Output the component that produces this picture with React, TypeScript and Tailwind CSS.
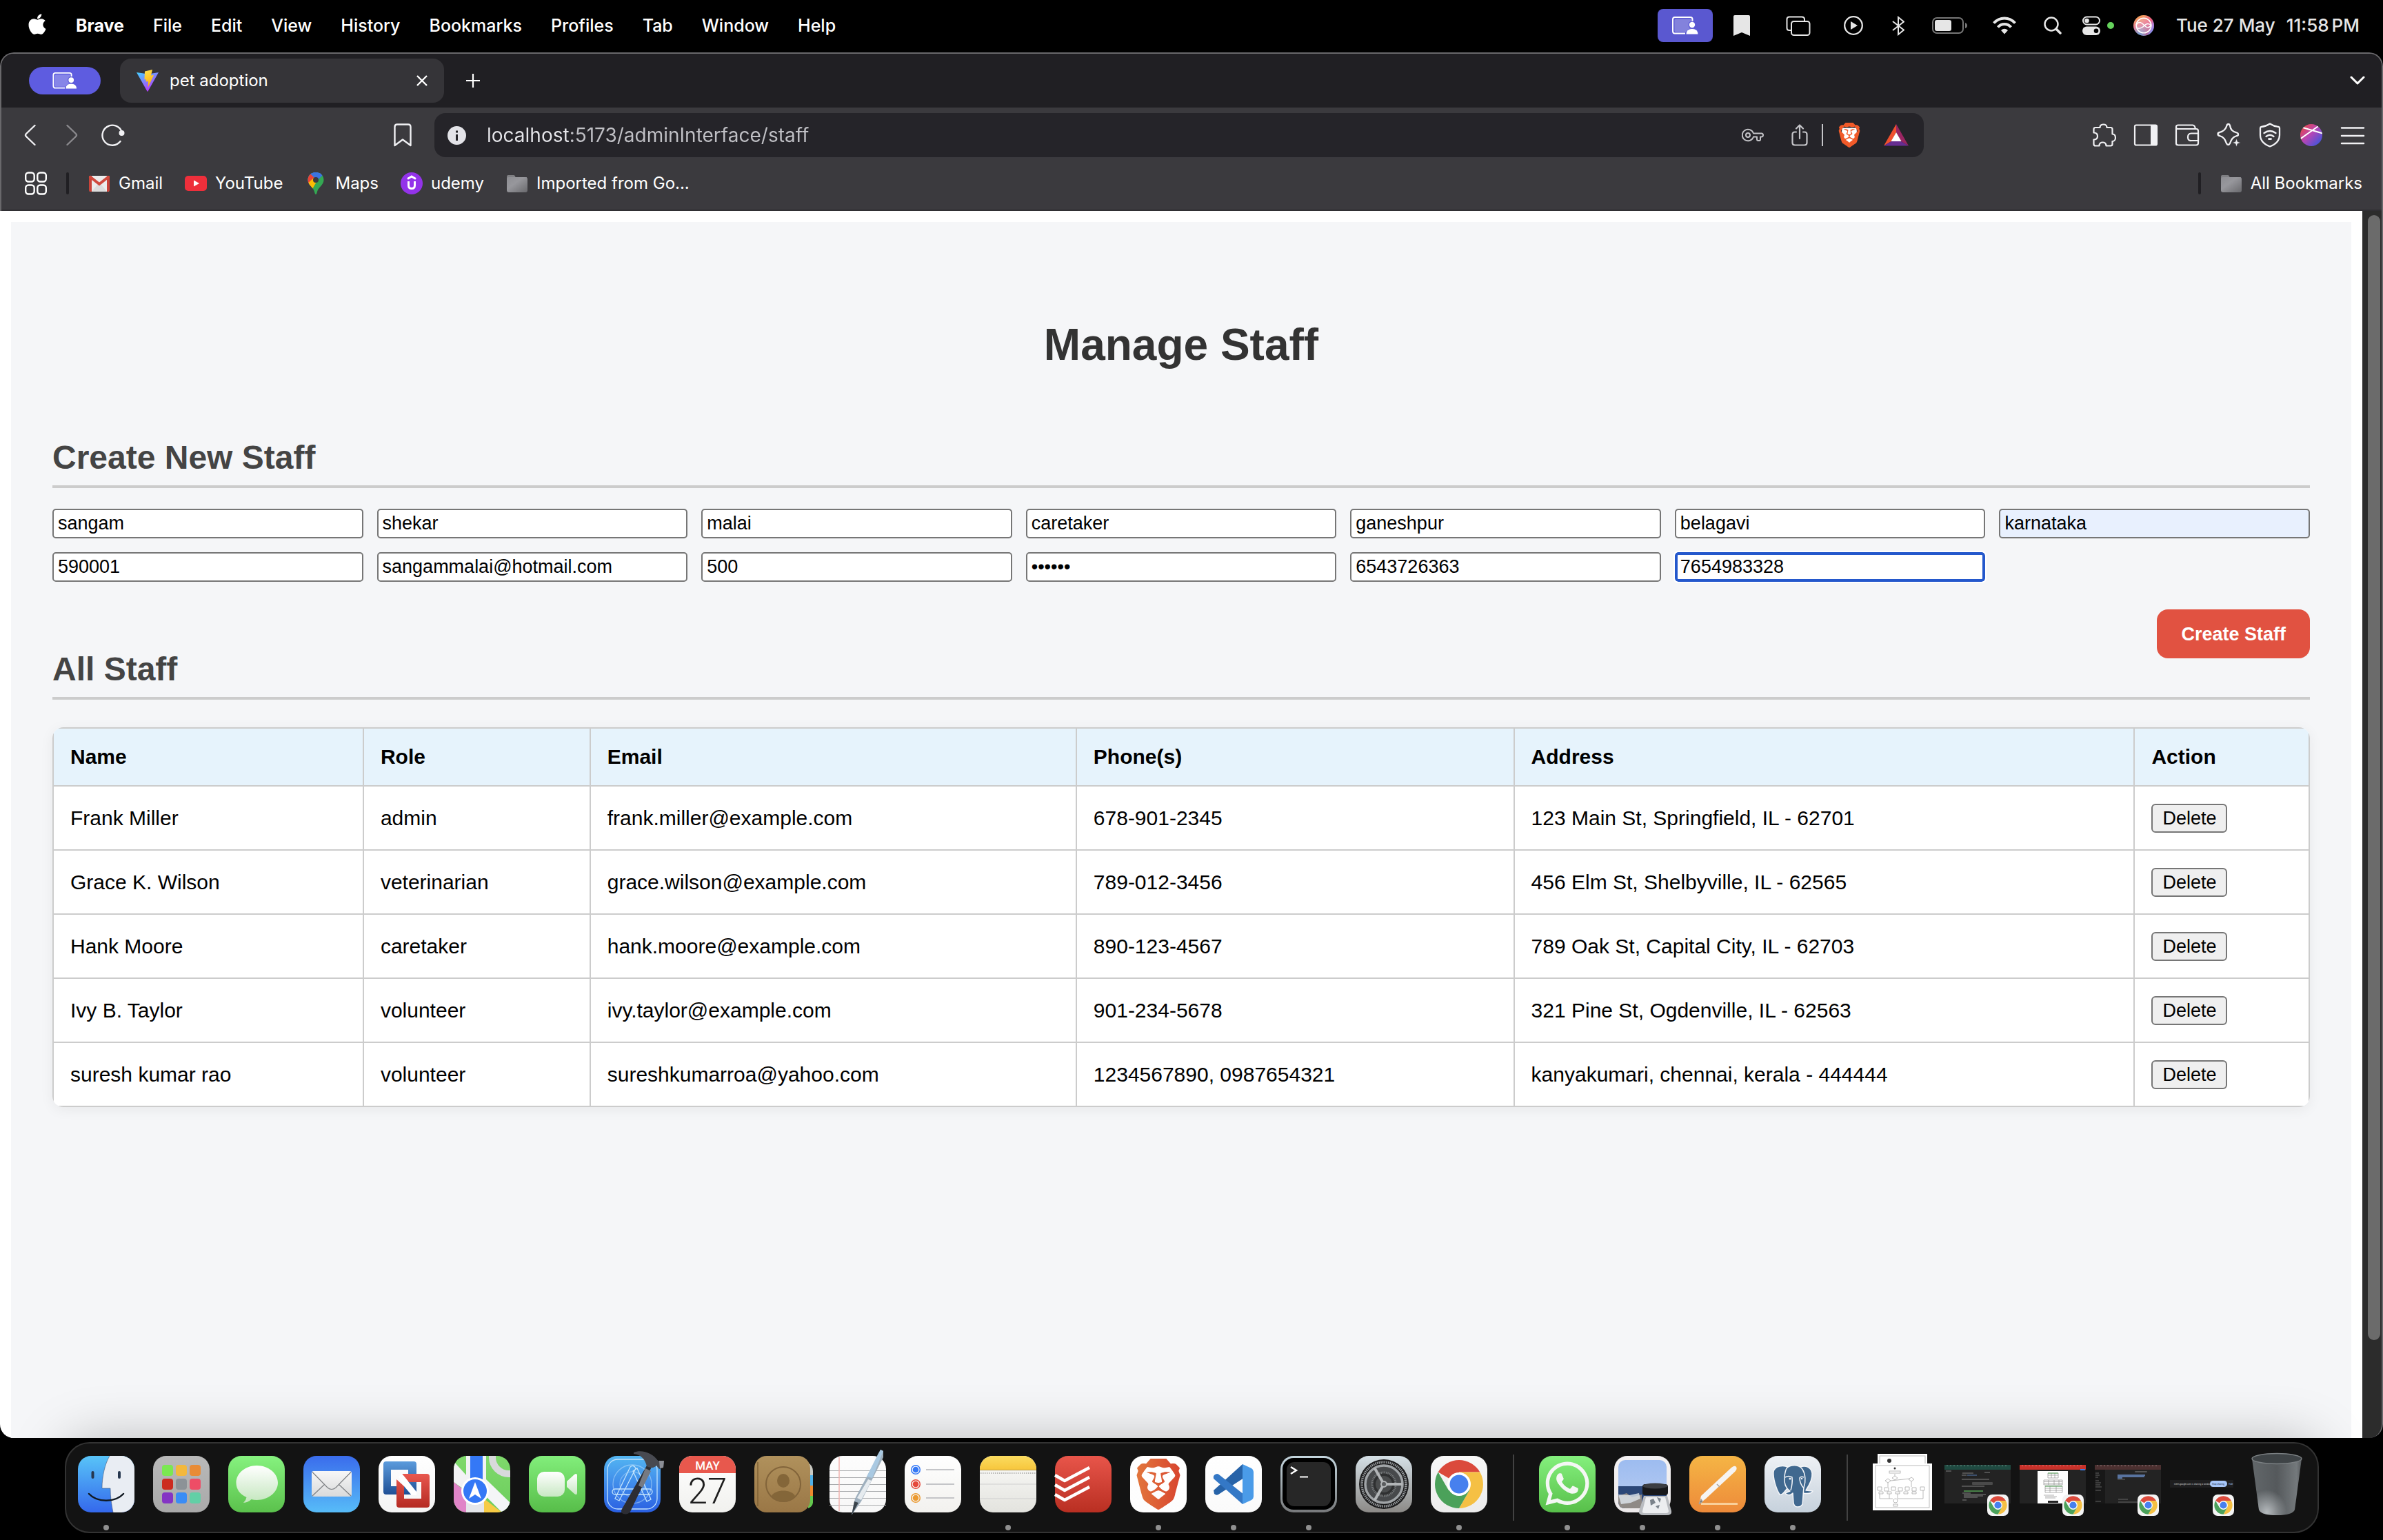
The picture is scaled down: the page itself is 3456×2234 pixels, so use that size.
import React from "react";
import { FaApple, FaWhatsapp } from "react-icons/fa";
import { SiBrave } from "react-icons/si";

/* ---------- shared glyphs ---------- */

function ShareGlyph({ className }: { className: string }) {
  return (
    <svg className={className} viewBox="0 0 38 26" fill="none">
      <rect x="3.5" y="3.5" width="25" height="19" rx="2" fill="#fff" fillOpacity="0.25" />
      <path d="M29.5 7V4Q29.5 1 26.5 1H4Q1 1 1 4V21Q1 24.500 4 24.500H19" stroke="#fff" strokeWidth="2" />
      <circle cx="29" cy="12" r="5.500" fill="#5a58d6" />
      <circle cx="29" cy="12" r="4.200" fill="#fff" />
      <path d="M20 26C20 20 24 17.500 29 17.500S38 20 38 26Z" fill="#fff" stroke="#5a58d6" strokeWidth="1" />
    </svg>
  );
}

function BraveLion({ className, fill }: { className: string; fill: string }) {
  return (
    <svg className={className} viewBox="0 0 24 24" overflow="visible">
      <path d="M5 5H19L19.500 12L16 18L12 21L8 18L4.500 12Z" fill="#fff" />
      <SiBrave x="0" y="0" size="24" fill={fill} />
    </svg>
  );
}

function FolderGlyph() {
  return (
    <svg className="h-7 w-8" viewBox="0 0 32 28">
      <defs>
        <linearGradient id="folder" x1="0" y1="0" x2="1" y2="1">
          <stop offset="0" stopColor="#8e8e93" />
          <stop offset="0.4" stopColor="#97979c" />
          <stop offset="1" stopColor="#69696d" />
        </linearGradient>
      </defs>
      <path d="M1 4Q1 2 3 2H11Q13 2 13.500 5H30V10H1Z" fill="#7f7f83" />
      <rect x="1" y="5" width="30" height="22" rx="3" fill="url(#folder)" />
    </svg>
  );
}

/* ---------- macOS menu bar ---------- */

const menus = ["File", "Edit", "View", "History", "Bookmarks", "Profiles", "Tab", "Window", "Help"];

function MenuBar() {
  return (
    <header className="flex h-[76px] shrink-0 items-center justify-between bg-black pr-[34px] pb-0.5 pl-10 text-[25px] leading-8 text-white">
      <nav className="flex items-center gap-[42px]">
        <button aria-label="Apple menu" className="flex w-7 justify-center pb-1">
          <FaApple size="34" className="shrink-0" />
        </button>
        <button className="font-bold">Brave</button>
        {menus.map((m) => (
          <button key={m} className="font-medium">
            {m}
          </button>
        ))}
      </nav>
      <div className="flex items-center text-[#e6e6e6]">
        <div className="flex h-12 w-20 items-center justify-center rounded-lg bg-[#5a58d0]">
          <ShareGlyph className="h-[26px] w-[38px]" />
        </div>
        <svg className="ml-[30px] h-[30px] w-6" viewBox="0 0 24 30">
          <path d="M0 2Q0 0 2 0H22Q24 0 24 2V30L12 25L0 30Z" fill="currentColor" />
        </svg>
        <svg className="ml-13 h-[29px] w-9" viewBox="0 0 36 29" fill="none" stroke="currentColor" strokeWidth="2">
          <path d="M7 21H5Q1.500 21 1.500 17.500V5Q1.500 1.500 5 1.500H23Q27 1.500 27 5V7" />
          <rect x="8" y="8" width="26.500" height="20" rx="3.500" />
        </svg>
        <svg className="ml-12 size-7" viewBox="0 0 28 28" fill="none">
          <circle cx="14" cy="14" r="12.800" stroke="currentColor" strokeWidth="2.300" />
          <path d="M10 8L20 14L10 20Z" fill="currentColor" />
        </svg>
        <svg className="ml-[42px] h-[29px] w-[18px]" viewBox="0 0 18 29" fill="none" stroke="currentColor" strokeWidth="2">
          <path d="M1 8L17 20.500L9 27V2L17 8.500L1 21" />
        </svg>
        <svg className="ml-10 h-6 w-[52px]" viewBox="0 0 52 24" fill="none">
          <rect x="1" y="1" width="44" height="22" rx="6" stroke="#767676" strokeWidth="2" />
          <rect x="4" y="4" width="24" height="16" rx="3" fill="currentColor" />
          <path d="M48 8Q51 9 51 12T48 16Z" fill="#767676" />
        </svg>
        <svg className="ml-9 h-[26px] w-[34px]" viewBox="0 0 34 26" fill="none" stroke="currentColor" strokeWidth="4">
          <path d="M1.500 9.500C10 0 24 0 32.500 9.500" />
          <path d="M7.500 15.500C12.500 9.500 21.500 9.500 26.500 15.500" />
          <path d="M12 20Q17 15.500 22 20L17 25.500Z" fill="currentColor" stroke="none" />
        </svg>
        <svg className="ml-10 h-[26px] w-[26px]" viewBox="0 0 26 26" fill="none" stroke="currentColor" strokeLinecap="round">
          <circle cx="11" cy="11" r="9.500" strokeWidth="2.500" />
          <path d="M18 18L24 24" strokeWidth="3.500" />
        </svg>
        <svg className="ml-[30px] h-7 w-[26px]" viewBox="0 0 26 28" fill="none">
          <rect x="1" y="1.500" width="24" height="11" rx="5.500" stroke="currentColor" strokeWidth="2" />
          <circle cx="6.500" cy="7" r="3.300" fill="currentColor" />
          <rect x="0" y="15.500" width="26" height="12.500" rx="6.200" fill="currentColor" />
          <circle cx="20" cy="21.700" r="3.300" fill="#000" />
        </svg>
        <span className="ml-2.5 size-2.5 rounded-full bg-[#65d35c]" />
        <svg className="ml-7 size-[30px]" viewBox="0 0 30 30">
          <defs>
            <linearGradient id="siriA" x1="0.2" y1="0" x2="0.6" y2="1">
              <stop offset="0" stopColor="#f5a24a" />
              <stop offset="0.45" stopColor="#e8829a" />
              <stop offset="1" stopColor="#48b6f5" />
            </linearGradient>
            <linearGradient id="siriB" x1="0" y1="0" x2="1" y2="0.3">
              <stop offset="0.5" stopColor="#f0506a" stopOpacity="0" />
              <stop offset="0.85" stopColor="#f0406a" />
              <stop offset="1" stopColor="#b478f0" />
            </linearGradient>
          </defs>
          <circle cx="15" cy="15" r="15" fill="url(#siriA)" />
          <circle cx="15" cy="15" r="15" fill="url(#siriB)" opacity="0.6" />
          <circle cx="15" cy="15" r="10.800" fill="#fff" fillOpacity="0.15" stroke="#fff" strokeWidth="1.600" />
          <path
            d="M4 14C9 7 13 12 16 15S22 20 26 14M4 18C9 21 13 18 16 15S22 11 26 15"
            fill="none"
            stroke="#fff"
            strokeWidth="1.400"
          />
        </svg>
        <time className="ml-8 flex gap-4 text-[26px] font-medium whitespace-nowrap">
          <span>Tue 27 May</span>
          <span className="flex gap-1">
            <span>11:58</span>
            <span>PM</span>
          </span>
        </time>
      </div>
    </header>
  );
}

/* ---------- browser chrome ---------- */

function TabStrip() {
  return (
    <div className="flex h-[78px] items-center justify-between bg-[#201f23] pr-6 pl-10">
      <div className="flex items-center">
        <button aria-label="Screen sharing" className="flex h-10 w-[104px] items-center justify-center rounded-full bg-[#5e5ce0]">
          <ShareGlyph className="h-6 w-9" />
        </button>
        <div className="ml-7 flex h-16 w-[470px] items-center rounded-2xl bg-[#353438] pr-5 pl-6 text-[24px] text-white">
          <svg className="size-8" viewBox="0 0 32 32">
            <defs>
              <linearGradient id="viteA" x1="0" y1="0" x2="0.6" y2="1">
                <stop offset="0" stopColor="#41d1ff" />
                <stop offset="1" stopColor="#bd34fe" />
              </linearGradient>
              <linearGradient id="viteB" x1="0.4" y1="0" x2="0.6" y2="1">
                <stop offset="0" stopColor="#ffdf4a" />
                <stop offset="1" stopColor="#ffa800" />
              </linearGradient>
            </defs>
            <path d="M0 4L15.500 31.500Q16 32 16.500 31.500L32 4L17 6.500Z" fill="url(#viteA)" />
            <path d="M12 2.500L23 0L21 8.500L25 8L16.500 26L17 17L13.500 17.500L14 14L11.500 14.500Z" fill="url(#viteB)" />
          </svg>
          <span className="ml-4 flex-1">pet adoption</span>
          <button aria-label="Close tab" className="flex size-6 items-center justify-center">
            <svg className="size-4" viewBox="0 0 16 16" stroke="#fff" strokeWidth="2.400">
              <path d="M1 1L15 15M15 1L1 15" />
            </svg>
          </button>
        </div>
        <button aria-label="New tab" className="ml-8">
          <svg className="size-5" viewBox="0 0 20 20" stroke="#fff" strokeWidth="2.200">
            <path d="M10 0V20M0 10H20" />
          </svg>
        </button>
      </div>
      <button aria-label="Search tabs">
        <svg className="h-3.5 w-[22px]" viewBox="0 0 22 14" fill="none" stroke="#fff" strokeWidth="3" strokeLinecap="round" strokeLinejoin="round">
          <path d="M2 2L11 11L20 2" />
        </svg>
      </button>
    </div>
  );
}

function Toolbar() {
  return (
    <div className="flex h-20 items-center bg-[#3b3a3e] text-[#f1f1f4]">
      <div className="flex w-[628px] shrink-0 items-center justify-between px-[33px]">
        <div className="flex items-center gap-[34px]">
          <button aria-label="Back">
            <svg className="h-8 w-[18px]" viewBox="0 0 18 32" fill="none" stroke="currentColor" strokeWidth="2.400" strokeLinecap="round" strokeLinejoin="round">
              <path d="M15.500 2L3 14Q1 16 3 18L15.500 30" />
            </svg>
          </button>
          <button aria-label="Forward" className="ml-2 text-[#8a898d]">
            <svg className="h-8 w-[18px]" viewBox="0 0 18 32" fill="none" stroke="currentColor" strokeWidth="2.400" strokeLinecap="round" strokeLinejoin="round">
              <path d="M2.500 2L15 14Q17 16 15 18L2.500 30" />
            </svg>
          </button>
          <button aria-label="Reload">
            <svg className="h-8 w-[34px]" viewBox="0 0 34 32" fill="none" stroke="currentColor" strokeWidth="2.400" strokeLinecap="round">
              <path d="M27.500 25A14.500 14.500 0 1 1 29.500 11" />
              <circle cx="29.500" cy="13" r="3" fill="currentColor" strokeWidth="2" />
            </svg>
          </button>
        </div>
        <button aria-label="Bookmark this page">
          <svg className="h-[34px] w-[26px]" viewBox="0 0 26 34" fill="none" stroke="currentColor" strokeWidth="2.400" strokeLinejoin="round">
            <path d="M1.500 5Q1.500 1.500 5 1.500H21Q24.500 1.500 24.500 5V32L13 23.500L1.500 32Z" />
          </svg>
        </button>
      </div>
      <div className="flex h-16 flex-1 items-center rounded-2xl bg-[#252429] pr-[22px] pl-[19px] text-[#c4c4c8]">
        <svg className="size-[27px]" viewBox="0 0 27 27">
          <circle cx="13.500" cy="13.500" r="13.500" fill="#e3e3e8" />
          <path d="M12 12H15V21H12Z M12 6.500H15V9.500H12Z" fill="#252429" />
        </svg>
        <input
          aria-label="Address"
          defaultValue="localhost:5173/adminInterface/staff"
          className="ml-[30px] h-10 min-w-0 flex-1 bg-[linear-gradient(90deg,#e6e6ea_121px,#c0c0c5_121px)] bg-clip-text text-[28px] text-transparent outline-none"
        />
        <button aria-label="Passwords">
          <svg className="h-5 w-8" viewBox="0 0 32 20" fill="none" stroke="currentColor" strokeWidth="2">
            <path d="M17 7.500A8.300 8.300 0 1 0 17 12.500H22V16Q22 18 24 18H25.500Q27 18 27 16V12.500H29Q31 12 31 10T29 7.500Z" strokeLinejoin="round" />
            <circle cx="9" cy="10" r="3" />
          </svg>
        </button>
        <button aria-label="Share" className="ml-10">
          <svg className="h-8 w-6" viewBox="0 0 24 32" fill="none" stroke="currentColor" strokeWidth="2.200" strokeLinecap="round" strokeLinejoin="round">
            <path d="M7 11.500H5Q1.500 11.500 1.500 15V27Q1.500 30.500 5 30.500H19Q22.500 30.500 22.500 27V15Q22.500 11.500 19 11.500H17" />
            <path d="M12 21V2M7 6.500L12 1.500L17 6.500" />
          </svg>
        </button>
        <span className="mx-5 h-8 w-0.5 bg-[#c4c4c8]" />
        <button aria-label="Brave Shields">
          <BraveLion className="size-9" fill="#f15a29" />
        </button>
        <button aria-label="Brave Rewards" className="ml-8">
          <svg className="h-8 w-9" viewBox="0 0 36 32">
            <path d="M18 0L0 31.500L11 25L18 12Z" fill="#f0502e" />
            <path d="M18 0L36 31.500L25 25L18 12Z" fill="#9a2562" />
            <path d="M0 31.500H36L25 25H11Z" fill="#662d91" />
            <path d="M18 12L25.500 25H10.500Z" fill="#fff" />
          </svg>
        </button>
      </div>
      <div className="flex w-[664px] shrink-0 items-center justify-end gap-6 pr-6">
        <button aria-label="Extensions">
          <svg className="size-9" viewBox="-1 -1 36 36" fill="none" stroke="currentColor" strokeWidth="2.200" strokeLinejoin="round">
            <path d="M4 6H10.500C10.500 3 12.500 1.500 15.500 1.500S20.500 3 20.500 6H26Q28.500 6 28.500 8.500V15.500C31.500 15.500 33 18 33 21S31 26 28.500 26V30Q28.500 32.500 26 32.500H19.500C19.500 29 17 27.500 14.500 27.500S9.500 29 9.500 32.500H4Q1.500 32.500 1.500 30V23.500C5 23.500 7 21.500 7 18.500S5 13.500 1.500 13.500V8.500Q1.500 6 4 6Z" />
          </svg>
        </button>
        <button aria-label="Side panel">
          <svg className="size-9" viewBox="0 0 36 36" fill="none">
            <rect x="2" y="3.500" width="32" height="29" rx="2" stroke="currentColor" strokeWidth="2.200" />
            <path d="M25 3H33Q34.500 3 34.500 5V31Q34.500 33 33 33H25Z" fill="currentColor" />
          </svg>
        </button>
        <button aria-label="Wallet">
          <svg className="size-9" viewBox="0 0 36 36" fill="none" stroke="currentColor" strokeWidth="2.200" strokeLinejoin="round">
            <path d="M2 6V30Q2 32.500 5 32.500H31Q34 32.500 34 29.500V12Q34 9 31 9H3Q2 8 2 6Q2 3.500 5 3.500H26Q29 3.500 30 9" />
            <path d="M34 15.500H24Q19 15.500 19 21T24 26H34Z" />
          </svg>
        </button>
        <button aria-label="Leo AI">
          <svg className="size-9" viewBox="0 0 36 36" fill="none" stroke="currentColor" strokeWidth="2.300" strokeLinejoin="round">
            <path d="M18 2Q19.500 2 20 4C21 10 23 12.500 30 14.500Q32 15 32 17T30 19C24 21 22 24 20 30Q19 32 17.500 32T15 30C13 24 11 21 5 19Q2.500 18.500 2.500 16.500T5 14C11 12.500 14 10 15.500 4Q16 2 18 2Z" />
            <path d="M29.500 23L31 27.500L35.500 29L31 30.500L29.500 35L28 30.500L23.500 29L28 27.500Z" fill="currentColor" stroke="#3b3a3e" strokeWidth="0.500" />
          </svg>
        </button>
        <button aria-label="VPN">
          <svg className="size-9" viewBox="0 0 36 36" fill="none" stroke="currentColor" strokeWidth="2.300" strokeLinejoin="round">
            <path d="M18 1.500Q24 5.500 30.500 6Q32 6.200 32 8V18C32 26 26 32 18 34.500C10 32 4 26 4 18V8Q4 6.200 5.500 6Q12 5.500 18 1.500Z" />
            <path d="M9.500 15Q18 9 26.500 15M12.500 20Q18 15.500 23.500 20" strokeLinecap="round" />
            <ellipse cx="18" cy="23.500" rx="3" ry="1.500" fill="currentColor" stroke="none" />
          </svg>
        </button>
        <button aria-label="Profile">
          <svg className="size-9" viewBox="0 0 36 36">
            <defs>
              <linearGradient id="avatar" x1="0.1" y1="0.1" x2="0.9" y2="0.9">
                <stop offset="0" stopColor="#e5484d" />
                <stop offset="0.45" stopColor="#b745b5" />
                <stop offset="1" stopColor="#3f55dd" />
              </linearGradient>
              <clipPath id="avatarClip">
                <circle cx="18" cy="18" r="16" />
              </clipPath>
            </defs>
            <circle cx="18" cy="18" r="16" fill="url(#avatar)" />
            <path d="M0 25L31 3M2 6L36 16" stroke="#fff" strokeWidth="2" clipPath="url(#avatarClip)" />
          </svg>
        </button>
        <button aria-label="Menu">
          <svg className="size-9" viewBox="0 0 36 36" stroke="currentColor" strokeWidth="2.500" strokeLinecap="round">
            <path d="M2 7.500H34M2 19H34M2 30H34" />
          </svg>
        </button>
      </div>
    </div>
  );
}

function GmailGlyph() {
  return (
    <svg className="size-8" viewBox="0 0 32 32">
      <path d="M2 5H30V28H2Z" fill="#ececec" />
      <path d="M5 28L13 18H19L27 28Z" fill="#dcdcdc" />
      <path d="M1 5H5V28H3Q1 28 1 26Z M31 5H27V28H29Q31 28 31 26Z" fill="#c9443a" />
      <path d="M2 6L16 17L30 6" fill="none" stroke="#d04a3e" strokeWidth="4" />
    </svg>
  );
}

function YoutubeGlyph() {
  return (
    <svg className="size-8" viewBox="0 0 32 32">
      <rect x="0" y="5" width="32" height="22" rx="5" fill="#ee2f3b" />
      <path d="M13 11.500L21 16L13 20.500Z" fill="#fff" />
    </svg>
  );
}

function MapsGlyph() {
  return (
    <svg className="size-8" viewBox="0 0 32 32">
      <defs>
        <clipPath id="pin">
          <path d="M16 0C22.500 0 27.500 4.500 27.500 11C27.500 19 19 21 17.500 30Q17 32 16 32T14.500 30C13 21 4.500 19 4.500 11C4.500 4.500 9.500 0 16 0Z" />
        </clipPath>
      </defs>
      <g clipPath="url(#pin)">
        <rect width="32" height="32" fill="#34a853" />
        <path d="M0 24L16 11L24 2L32 0V-2H4Z" fill="#4285f4" />
        <path d="M0 0L8 2L18 10L8 20L0 16Z" fill="#ea4335" />
        <path d="M8 2L16 -2L30 0L18 12Z" fill="#3b74e0" />
        <path d="M2 18L13 8L18 12L10 26Z" fill="#fbbc04" />
      </g>
      <circle cx="16" cy="11" r="4" fill="#3b3a3e" />
    </svg>
  );
}

function UdemyGlyph() {
  return (
    <svg className="size-8" viewBox="0 0 32 32" fill="none">
      <circle cx="16" cy="16" r="16" fill="#9333ea" />
      <path d="M10 9.500L16 6L22 9.500" stroke="#fff" strokeWidth="3" />
      <path d="M11.500 13V19Q11.500 23.500 16 23.500T20.500 19V13" stroke="#fff" strokeWidth="3" />
    </svg>
  );
}

const bookmarks = [
  { label: "Gmail", icon: <GmailGlyph /> },
  { label: "YouTube", icon: <YoutubeGlyph /> },
  { label: "Maps", icon: <MapsGlyph /> },
  { label: "udemy", icon: <UdemyGlyph /> },
  { label: "Imported from Go...", icon: <FolderGlyph /> },
];

function BookmarksBar() {
  return (
    <div className="flex h-[70px] items-center justify-between border-b-2 border-[#302f33] bg-[#3b3a3e] pr-7 pb-2 pl-[34px] text-[24px] text-white">
      <div className="flex items-center">
        <button aria-label="Bookmark groups">
          <svg className="h-[34px] w-8" viewBox="0 0 32 34" fill="none" stroke="currentColor" strokeWidth="2.400">
            <rect x="1.200" y="1.500" width="12.500" height="13" rx="4" />
            <rect x="18.300" y="1.500" width="12.500" height="13" rx="4" />
            <rect x="1.200" y="19.500" width="12.500" height="13" rx="4" />
            <rect x="18.300" y="19.500" width="12.500" height="13" rx="4" />
          </svg>
        </button>
        <span className="mx-7 h-8 w-1 rounded-full bg-[#201f23]" />
        <nav className="flex items-center gap-8">
          {bookmarks.map((b) => (
            <a key={b.label} href="#" className="flex items-center gap-3 whitespace-nowrap">
              {b.icon}
              {b.label}
            </a>
          ))}
        </nav>
      </div>
      <div className="flex items-center">
        <span className="mr-7 h-8 w-1 rounded-full bg-[#201f23]" />
        <a href="#" className="flex items-center gap-3">
          <FolderGlyph />
          All Bookmarks
        </a>
      </div>
    </div>
  );
}

/* ---------- page ---------- */

const fields = [
  { label: "First name", value: "sangam" },
  { label: "Middle name", value: "shekar" },
  { label: "Last name", value: "malai" },
  { label: "Role", value: "caretaker" },
  { label: "Street", value: "ganeshpur" },
  { label: "City", value: "belagavi" },
  { label: "State", value: "karnataka", state: "filled" },
  { label: "Zip code", value: "590001" },
  { label: "Email", value: "sangammalai@hotmail.com" },
  { label: "Salary", value: "500" },
  { label: "Password", value: "secret", type: "password" },
  { label: "Phone 1", value: "6543726363" },
  { label: "Phone 2", value: "7654983328", state: "active" },
];

const staff = [
  ["Frank Miller", "admin", "frank.miller@example.com", "678-901-2345", "123 Main St, Springfield, IL - 62701"],
  ["Grace K. Wilson", "veterinarian", "grace.wilson@example.com", "789-012-3456", "456 Elm St, Shelbyville, IL - 62565"],
  ["Hank Moore", "caretaker", "hank.moore@example.com", "890-123-4567", "789 Oak St, Capital City, IL - 62703"],
  ["Ivy B. Taylor", "volunteer", "ivy.taylor@example.com", "901-234-5678", "321 Pine St, Ogdenville, IL - 62563"],
  ["suresh kumar rao", "volunteer", "sureshkumarroa@yahoo.com", "1234567890, 0987654321", "kanyakumari, chennai, kerala - 444444"],
];

function fieldStyle(state?: string) {
  if (state === "filled") return "border-2 border-[#767676] bg-[#e8f0fe] px-1.5";
  if (state === "active") return "border-4 border-[#2458cc] bg-white px-1 outline-2 outline-white";
  return "border-2 border-[#767676] bg-white px-1.5";
}

function StaffPage() {
  return (
    <main className="flex-1 bg-white p-4 pb-0 font-['Liberation_Sans',Arial,sans-serif] text-black">
      <div className="h-full bg-[#f5f6f8] px-[60px] pt-[142px] pb-16">
        <h1 className="text-center text-[64px] leading-[72px] font-bold text-[#333]">Manage Staff</h1>
        <h2 className="mt-[100px] border-b-4 border-[#ccc] pb-3 text-5xl leading-[56px] font-bold text-[#444]">
          Create New Staff
        </h2>
        <form className="mt-[30px]" onSubmit={(e) => e.preventDefault()}>
          <div className="grid grid-cols-7 gap-5">
            {fields.map((f) => (
              <input
                key={f.label}
                aria-label={f.label}
                type={f.type ?? "text"}
                defaultValue={f.value}
                className={`h-[43px] w-full min-w-0 rounded-[5px] text-[27px] leading-8 ${fieldStyle(f.state)}`}
              />
            ))}
          </div>
          <div className="mt-10 flex justify-end">
            <button className="h-[71px] rounded-2xl bg-[#e15241] px-[35px] text-[27px] leading-8 font-bold text-white">
              Create Staff
            </button>
          </div>
        </form>
        <h2 className="-mt-3 border-b-4 border-[#ccc] pb-3 text-5xl leading-[56px] font-bold text-[#444]">All Staff</h2>
        <div className="mt-10 overflow-hidden rounded-2xl shadow-[0_4px_20px_rgba(0,0,0,0.06)]">
          <table className="w-full table-fixed border-collapse bg-white text-left text-[30px] leading-9">
            <colgroup>
              <col className="w-[13.75%]" />
              <col className="w-[10.05%]" />
              <col className="w-[21.55%]" />
              <col className="w-[19.4%]" />
              <col className="w-[27.5%]" />
              <col />
            </colgroup>
            <thead className="bg-[#e6f3fc]">
              <tr className="h-[84px]">
                {["Name", "Role", "Email", "Phone(s)", "Address", "Action"].map((h) => (
                  <th key={h} className="border-2 border-[#ccc] px-6 font-bold">
                    {h}
                  </th>
                ))}
              </tr>
            </thead>
            <tbody>
              {staff.map((row) => (
                <tr key={row[0]} className="h-[93px]">
                  {row.map((cell, i) => (
                    <td key={i} className="border-2 border-[#ccc] px-6">
                      {cell}
                    </td>
                  ))}
                  <td className="border-2 border-[#ccc] px-6">
                    <button className="block h-[42px] rounded-md border-2 border-[#767676] bg-[#efefef] px-3.5 text-[27px] leading-8">
                      Delete
                    </button>
                  </td>
                </tr>
              ))}
            </tbody>
          </table>
        </div>
      </div>
    </main>
  );
}

function BrowserWindow() {
  return (
    <section className="flex flex-1 flex-col overflow-hidden rounded-[20px] bg-[#201f23]">
      <div className="overflow-hidden rounded-t-[20px] border-2 border-b-0 border-[#69686b]">
        <TabStrip />
        <Toolbar />
        <BookmarksBar />
      </div>
      <div className="flex flex-1">
        <StaffPage />
        <div className="flex w-[30px] flex-col items-end rounded-br-[20px] border-r-2 border-[#69686b] bg-[#2c2c2c] pt-1.5 pr-0.5">
          <div className="h-[92%] w-[18px] rounded-full bg-[#6b6b6b]" />
        </div>
      </div>
    </section>
  );
}

/* ---------- dock ---------- */

function Gradient({ id, from, to }: { id: string; from: string; to: string }) {
  return (
    <linearGradient id={id} x1="0" y1="0" x2="0" y2="1">
      <stop offset="0" stopColor={from} />
      <stop offset="1" stopColor={to} />
    </linearGradient>
  );
}

function Tile({ id, from, to, children }: { id: string; from: string; to: string; children?: React.ReactNode }) {
  return (
    <svg className="size-[82px] overflow-visible" viewBox="0 0 82 82">
      <defs>
        <Gradient id={id} from={from} to={to} />
        <clipPath id={`${id}-clip`}>
          <rect width="82" height="82" rx="19" />
        </clipPath>
      </defs>
      <rect width="82" height="82" rx="19" fill={`url(#${id})`} />
      {children}
    </svg>
  );
}

function ChromeBall() {
  return (
    <g>
      <path d="M10.700 23.500A35 35 0 0 1 71.300 23.500H41V41Z" fill="#db4a3c" />
      <path d="M71.300 23.500A35 35 0 0 1 41 76L56.200 49.700L41 41V23.500Z" fill="#f5c044" />
      <path d="M10.700 23.500A35 35 0 0 0 41 76L56.200 49.700L41 41L25.800 49.700Z" fill="#4ba15a" />
      <circle cx="41" cy="41" r="17" fill="#fff" />
      <circle cx="41" cy="41" r="13.500" fill="#4780ee" />
    </g>
  );
}

function ChromeBadge() {
  return (
    <svg x="64" y="56" width="31" height="31" viewBox="0 0 82 82">
      <rect width="82" height="82" rx="19" fill="#f4f4f4" />
      <ChromeBall />
    </svg>
  );
}

function Finder() {
  return (
    <Tile id="finder" from="#58c4f8" to="#3468ec">
      <g clipPath="url(#finder-clip)">
        <path d="M46 0C39 12 35 30 35 47H47C47 60 49 72 51 82H82V0Z" fill="#e9edf3" />
        <path d="M46 0C39 12 35 30 35 47H47C47 60 49 72 51 82" fill="none" stroke="#3c4a66" strokeOpacity="0.5" />
      </g>
      <path d="M21.500 24V31M60 24V31" stroke="#26374f" strokeWidth="4" strokeLinecap="round" />
      <path d="M16 55C28 68 54 68 66 55" fill="none" stroke="#101820" strokeWidth="2.500" strokeLinecap="round" />
    </Tile>
  );
}

const padColors = ["#7be851", "#f3b83c", "#e88b36", "#cc2b20", "#8c9297", "#ee4d66", "#8434c4", "#3a8cf5", "#62cfa6"];

function Launchpad() {
  return (
    <Tile id="pad" from="#b9b9b9" to="#a9a9a9">
      {padColors.map((c, i) => (
        <rect key={c} x={13 + (i % 3) * 20} y={13 + Math.floor(i / 3) * 20} width="16" height="16" rx="4" fill={c} />
      ))}
    </Tile>
  );
}

function Messages() {
  return (
    <Tile id="msg" from="#86f27f" to="#5bc14c">
      <Gradient id="bubble" from="#ffffff" to="#c3e6bd" />
      <path d="M41.500 14C58 14 72 25 72 39S58 64 41.500 64Q37 64 33.500 63Q29 67.500 22 68Q26 64 26.500 60C17 56 11.500 48 11.500 39C11.500 25 25 14 41.500 14Z" fill="url(#bubble)" />
    </Tile>
  );
}

function Mail() {
  return (
    <Tile id="mail" from="#3a6cec" to="#57bcf8">
      <Gradient id="envelope" from="#f7f7f7" to="#d9dadb" />
      <rect x="12" y="22" width="58" height="37" rx="3" fill="url(#envelope)" />
      <path d="M13 58L31 41M69 58L51 41M13 23.500L35 46Q41 51 47 46L69 23.500" fill="none" stroke="#7e8184" strokeWidth="1.200" />
    </Tile>
  );
}

function VmWare() {
  return (
    <Tile id="vm" from="#ffffff" to="#f4f4f4">
      <Gradient id="vmBlue" from="#5b9bdc" to="#1f4f95" />
      <Gradient id="vmRed" from="#e8584f" to="#b52a22" />
      <path fillRule="evenodd" d="M11 8H51Q55 8 55 12V52Q55 56 51 56H11Q7 56 7 52V12Q7 8 11 8ZM18 20V44H43V20Z" fill="url(#vmBlue)" />
      <path d="M34 26H70Q74 26 74 30V71Q74 75 70 75H30Q26 75 26 71V34L37 44V62H62V38H44Z" fill="url(#vmRed)" />
      <path d="M29 30L34 26L55 52V57H48L37 44Z" fill="#fff" />
    </Tile>
  );
}

function Maps() {
  return (
    <Tile id="maps" from="#7fd96c" to="#6ccd5c">
      <g clipPath="url(#maps-clip)">
        <path d="M0 8V38L20 52V30Z" fill="#f2f2f4" />
        <path d="M0 38L22 55V82H0Z" fill="#e084c8" />
        <path d="M44 62V82H70Z" fill="#f6cb45" />
        <path d="M18 0H26V50H18Z M40 0H47V50H40Z" fill="#f1f2f4" />
        <path d="M22 55H44V82H18V52Z" fill="#e4e6ea" />
        <path d="M47 34L82 68V82H70L40 52Z" fill="#f4f5f7" />
        <path d="M24 0H42V45H24Z" fill="#3478f6" />
        <circle cx="80" cy="2" r="24" fill="none" stroke="#d8d9dc" strokeWidth="10" />
      </g>
      <circle cx="31" cy="51" r="20" fill="#fff" />
      <circle cx="31" cy="51" r="17" fill="#3478f6" />
      <path d="M31 38L40 62L31 56L22 62Z" fill="#fff" />
    </Tile>
  );
}

function FaceTime() {
  return (
    <Tile id="ft" from="#82ee7b" to="#57bd49">
      <Gradient id="cam" from="#ffffff" to="#c8e8c3" />
      <rect x="12" y="23" width="40" height="36" rx="10" fill="url(#cam)" />
      <path d="M55 37L66 27Q70 24 70 29V53Q70 58 66 55L55 45Z" fill="url(#cam)" />
    </Tile>
  );
}

function Xcode() {
  return (
    <Tile id="xcode" from="#54b6f2" to="#2a5fe2">
      <g fill="none" stroke="#c3e4fd" strokeWidth="1.300">
        <rect x="5" y="5" width="72" height="72" rx="15" />
        <circle cx="41" cy="41" r="28" strokeOpacity="0.5" />
        <circle cx="41" cy="41" r="18" strokeOpacity="0.4" />
        <path d="M38 16L16 62L22 65L46 18Q43 12 38 16ZM42 22L62 66L68 63L48 18Z" />
        <rect x="12" y="48" width="58" height="8" rx="4" />
      </g>
      <path d="M62 14L69 16L38 81Q33 87 26 83Q24 80 26 77Z" fill="#2c2d33" />
      <path d="M60 18L68 22L56 46L50 43Z" fill="#767a82" />
      <path d="M43 -5C55 -10 71 -4 78 7L87 7L86 17L80 19L76 14C72 18 68 18 62 15C60 6 54 -2 43 -3Z" fill="#484a51" />
      <path d="M80 7L87 7L86 17L81 18Z" fill="#8c8f96" />
    </Tile>
  );
}

function Calendar() {
  return (
    <Tile id="cal" from="#ffffff" to="#f1f1ee">
      <g clipPath="url(#cal-clip)">
        <rect width="82" height="25" fill="#e8584d" />
      </g>
      <text x="41" y="20" textAnchor="middle" fontFamily="Roboto, sans-serif" fontWeight="500" fontSize="17" fill="#fff">
        MAY
      </text>
      <text x="41" y="69" textAnchor="middle" fontFamily="Roboto, sans-serif" fontWeight="300" fontSize="51" fill="#1e1e1e">
        27
      </text>
    </Tile>
  );
}

function Contacts() {
  return (
    <svg className="size-[82px] overflow-visible" viewBox="0 0 82 82">
      <Gradient id="book" from="#b0915c" to="#9a7746" />
      <path d="M78 10Q85 14 85 22V28H78Z" fill="#c9c9c3" />
      <path d="M78 28H85V43H78Z" fill="#4fb0e8" />
      <path d="M78 43H85V58H78Z" fill="#ee8a2e" />
      <path d="M78 58H85V68Q84 74 78 76Z" fill="#63c84e" />
      <rect width="81" height="82" rx="18" fill="url(#book)" />
      <path d="M5 9V73" stroke="#7e6034" strokeWidth="1.500" />
      <circle cx="42" cy="41" r="25" fill="none" stroke="#82643a" strokeWidth="2" />
      <ellipse cx="42" cy="36" rx="9" ry="10" fill="#846639" />
      <path d="M25 58C30 48 54 48 59 58C50 69 34 69 25 58Z" fill="#846639" />
    </svg>
  );
}

function TextEdit() {
  return (
    <Tile id="te" from="#fdfdfd" to="#f7f7f7">
      <path d="M0 21.500H82M0 31.500H82M0 41.500H82M0 51.500H82M0 61.500H82M0 71.500H82" stroke="#a9abad" strokeWidth="1.200" />
      <path d="M14 2V80" stroke="#f2b4b0" strokeWidth="1.500" />
      <path d="M74 -9L78 -7V2L46 66L32 86L37 62L70 0Z" fill="#9fb0be" />
      <path d="M74 -9L78 -7L62 32L54 30L70 -2Z" fill="#a9c9e2" />
      <path d="M56 34L61 36L46 64L40 61Z" fill="#e6ebef" />
      <path d="M36 66L42 68L32 86Z" fill="#3b444c" />
    </Tile>
  );
}

const reminderRows = [
  { y: 20, color: "#3478f6" },
  { y: 41, color: "#e5493c" },
  { y: 61, color: "#eb9a31" },
];

function Reminders() {
  return (
    <Tile id="rem" from="#ffffff" to="#f2f1ee">
      {reminderRows.map((r) => (
        <g key={r.y}>
          <circle cx="16" cy={r.y} r="6.300" fill="none" stroke={r.color} strokeWidth="1.500" />
          <circle cx="16" cy={r.y} r="4.300" fill={r.color} />
          <path d={`M31 ${r.y}H72`} stroke="#b3b5b8" strokeWidth="1.500" />
        </g>
      ))}
    </Tile>
  );
}

function Notes() {
  return (
    <Tile id="notes" from="#fbfbf9" to="#e3e3de">
      <Gradient id="notesTop" from="#fbdc60" to="#f7c63c" />
      <g clipPath="url(#notes-clip)">
        <rect width="82" height="20" fill="url(#notesTop)" />
      </g>
      <path d="M0 20.500H82" stroke="#b89a4a" strokeWidth="1" />
      <path d="M1 25H82" stroke="#a5a5a2" strokeWidth="1.500" strokeDasharray="1.500 1.500" />
      <path d="M0 41H82M0 62H82" stroke="#cfd0d0" strokeWidth="1.200" />
    </Tile>
  );
}

function Todoist() {
  return (
    <Tile id="todo" from="#e8554a" to="#b92f22">
      <path d="M0 28L14 36L50 17M0 42L14 50L50 31M0 56L14 64L50 45" fill="none" stroke="#fff" strokeWidth="4.500" strokeLinejoin="round" />
    </Tile>
  );
}

function BraveApp() {
  return (
    <Tile id="brave" from="#ffffff" to="#fdfdfd">
      <defs>
        <linearGradient id="lion" x1="0" y1="0" x2="1" y2="0">
          <stop offset="0" stopColor="#e2763c" />
          <stop offset="1" stopColor="#d8452f" />
        </linearGradient>
      </defs>
      <SiBrave x="4" y="4" size="74" fill="url(#lion)" />
    </Tile>
  );
}

function VsCode() {
  return (
    <Tile id="vsc" from="#ffffff" to="#fafafa">
      <path d="M54 12L56 32L19 56Q16 58 13 55L12 50Z" fill="#2763a8" />
      <path d="M12 32Q11 29 14 27L17 26Q19 26 21 28L56 56L54 70L12 33Z" fill="#3478c6" />
      <path d="M54 12L67 18Q70 20 70 23V59Q70 62 67 64L54 70Z" fill="#4a9be8" />
    </Tile>
  );
}

function Terminal() {
  return (
    <Tile id="term" from="#c4d6de" to="#77797b">
      <rect x="3" y="3" width="76" height="75" rx="16" fill="#000" />
      <rect x="9" y="9" width="64" height="64" rx="11" fill="#272727" />
      <path d="M15 16L23 21L15 26" fill="none" stroke="#fff" strokeWidth="2.500" />
      <path d="M28 30.500H40" stroke="#fff" strokeWidth="2" />
    </Tile>
  );
}

function Settings() {
  return (
    <Tile id="set" from="#d5e0e6" to="#8c8a87">
      <circle cx="41" cy="41" r="36" fill="#1c1c1d" />
      <circle cx="41" cy="41" r="32" fill="none" stroke="#9b9fa2" strokeWidth="3.500" strokeDasharray="1.500 1.200" />
      <circle cx="41" cy="41" r="27" fill="#47494b" stroke="#a0a4a7" strokeWidth="3.500" />
      <circle cx="41" cy="41" r="17" fill="#2f3031" stroke="#75787a" strokeWidth="3" strokeDasharray="1.500 1" />
      <circle cx="41" cy="41" r="12" fill="#4a4c4d" />
      <path d="M41 41H68M41 41L27.500 17.500M41 41L27.500 64.500" stroke="#b2b5b7" strokeWidth="4" />
      <circle cx="41" cy="41" r="4" fill="#5a5c5e" stroke="#b2b5b7" strokeWidth="2" />
    </Tile>
  );
}

function Chrome() {
  return (
    <Tile id="chrome" from="#f8f8f8" to="#ececec">
      <ChromeBall />
    </Tile>
  );
}

function WhatsApp() {
  return (
    <Tile id="wa" from="#84f07d" to="#58bf4a">
      <FaWhatsapp x="5" y="4" size="72" fill="#f5f7f5" />
    </Tile>
  );
}

function Preview() {
  return (
    <Tile id="prev" from="#f4f2f3" to="#ece9ea">
      <Gradient id="sky" from="#9dbcf0" to="#b9cdf2" />
      <rect x="6" y="6" width="70" height="70" rx="10" fill="url(#sky)" />
      <path d="M6 44H76V66Q76 76 66 76H16Q6 76 6 66Z" fill="#2b4778" />
      <path d="M6 58L18 54L26 60L40 56V76H16Q6 76 6 66Z" fill="#8f8a86" />
      <path d="M6 56L22 57L36 54L38 62L24 68L10 70Z" fill="#dfe6ee" fillOpacity="0.8" />
      <path d="M43 58H77L83 80Q84 86 76 86H43Q35 86 36 80Z" fill="#b9bcc0" />
      <path d="M46 60H74L79 80Q79 83 75 83H44Q40 83 41 80Z" fill="#eceef0" />
      <path d="M52 64L57 62L60 68L53 72Z M62 60L68 62L66 68Z M60 73L66 71L64 77Z" fill="#7b838b" />
      <rect x="41" y="41" width="37" height="16" rx="4" fill="#17181a" />
      <ellipse cx="59.500" cy="43.500" rx="18" ry="4" fill="#3c3e42" />
    </Tile>
  );
}

function Pages() {
  return (
    <Tile id="pages" from="#f5b545" to="#ed8a3a">
      <path d="M17 69.500H70" stroke="#f9cf9a" strokeWidth="3" />
      <path d="M61 17Q66 13 68 16T66 23L24 62L14 70L17 58Z" fill="#f6f4f2" />
      <path d="M40 41L44 45M14 70L19 66L17 63Z" fill="#555" stroke="#a7a29d" strokeWidth="1.500" />
    </Tile>
  );
}

function Postgres() {
  return (
    <Tile id="pg" from="#eef1f5" to="#c6d1dc">
      <g fill="#40688f" stroke="#f4f6f9" strokeWidth="1.500" strokeLinejoin="round">
        <path d="M52 16C60 13 68 17 69 25C70 33 64 44 60 50L70 51Q67 56 56 54L50 48Z" />
        <path d="M34 16C27 13 15 14 13 23C12 32 17 48 22 56Q25 57 29 52L34 46Z" />
        <path d="M32 18C38 12 49 13 54 18C60 26 60 38 57 46C56 54 56 62 55 70Q53 74 48 74T42 68L41 54C38 58 32 57 30 54L37 51C31 47 28 40 29 30Q30 22 32 18Z" />
      </g>
      <path d="M30 31Q35 28 40 31Q41 40 38 50M57 31Q53 29 51 32Q51 40 57 47" fill="none" stroke="#f4f6f9" strokeWidth="1.500" />
      <circle cx="37" cy="33" r="1.500" fill="#f4f6f9" />
      <circle cx="54" cy="33" r="1.300" fill="#f4f6f9" />
    </Tile>
  );
}

function DocStack() {
  return (
    <svg className="h-[82px] w-24 overflow-visible" viewBox="0 0 96 82">
      <rect x="14" y="-3" width="72" height="30" fill="#fff" />
      <rect x="17" y="0" width="66" height="30" fill="none" stroke="#bbb" strokeWidth="1" />
      <circle cx="31" cy="7" r="3" fill="#333" />
      <rect x="7" y="11" width="86" height="68" fill="#fff" />
      <g fill="none" stroke="#aaa" strokeWidth="0.800">
        <rect x="11" y="14" width="78" height="61" />
        <rect x="31" y="22" width="16" height="3" />
        <path d="M39 26V29M39 29L43 32L39 35L35 32ZM29 33L33 36L29 39L25 36ZM63 31L67 34L63 37L59 34ZM33 36L61 33M29 39V45M63 37V45" />
        <path d="M14 45H20V50H14ZM24 46H30V51H24ZM34 45H40V50H34ZM44 46H50V51H44ZM54 45H60V50H54ZM64 46H70V51H64ZM76 45H82V50H76Z" />
        <path d="M16 52H22V55H16ZM28 52H34V55H28ZM40 52H46V55H40ZM52 52H58V55H52ZM64 52H70V55H64Z" />
        <path d="M17 55V62H36M31 55V62M43 55V62H80V50" />
        <circle cx="40" cy="65" r="3" />
        <rect x="37" y="70" width="6" height="3" />
      </g>
      <circle cx="39" cy="18" r="1.500" fill="#333" />
    </svg>
  );
}

function WindowThumb({ bar, children }: { bar: string; children: React.ReactNode }) {
  return (
    <svg className="h-[82px] w-24 overflow-visible" viewBox="0 0 96 82">
      <rect x="2" y="13" width="96" height="56" fill="#232323" />
      <rect x="2" y="13" width="96" height="7" fill={bar} />
      <path d="M5 14.500H94" stroke="#fff" strokeOpacity="0.5" strokeWidth="0.800" strokeDasharray="2 3" />
      {children}
      <ChromeBadge />
    </svg>
  );
}

function ThumbChat() {
  return (
    <WindowThumb bar="#1f4a41">
      <g stroke="#8a8a8a" strokeWidth="0.900">
        <path d="M4 22H12M28 25H44M60 24H68M27 28H34M27 34H67M27 44H60" />
        <path d="M35 28H49" stroke="#5b86c4" />
        <path d="M30 51H58" stroke="#56a356" strokeWidth="1.500" />
        <path d="M28 54H40M30 56H62M30 58H58M30 60H50M28 64H34" />
      </g>
      <rect x="42" y="38" width="30" height="4" rx="1" fill="#4a4a4a" />
    </WindowThumb>
  );
}

function ThumbDoc() {
  return (
    <WindowThumb bar="#c8312a">
      <rect x="28" y="22" width="44" height="47" fill="#fff" />
      <g fill="none" stroke="#8f8f8f" strokeWidth="0.700">
        <path d="M43 25H58V32H43ZM43 28H58M48 25V32M53 25V32" />
        <path d="M37 35H64V42H37ZM37 37.500H64M37 40H64M44 35V42M52 35V42M59 35V42" />
        <path d="M39 44H64V53H39ZM39 47H64M39 50H64M46 44V53M55 44V53" />
        <path d="M37 57H52M39 59H56M39 61H54" />
      </g>
      <path d="M43 25H58M39 44H64" stroke="#5fae62" />
      <rect x="43" y="65" width="15" height="3" fill="#222" />
      <rect x="90" y="19" width="7" height="2" fill="#3c7be0" />
    </WindowThumb>
  );
}

function ThumbEditor() {
  return (
    <WindowThumb bar="#4c3030">
      <rect x="2" y="20" width="15" height="49" fill="#181818" />
      <path d="M3 25H8M3 28H9M3 31H7M3 36H8M3 39H11M3 42H10M3 45H12M3 50H11M3 66H11" stroke="#777" strokeWidth="0.800" />
      <rect x="60" y="22" width="18" height="2" rx="1" fill="#555" />
      <path d="M35 28H75M35 30H74M35 32H42" stroke="#6b8fc9" strokeWidth="1.700" />
      <path d="M35 34H46M36 63H50M36 67H70" stroke="#777" strokeWidth="0.800" />
    </WindowThumb>
  );
}

function ThumbSharing() {
  return (
    <svg className="h-[82px] w-24 overflow-visible" viewBox="0 0 96 82">
      <rect x="2" y="35" width="92" height="11" fill="#1e1e1f" />
      <text x="8" y="42" fontSize="3" fontFamily="Inter, sans-serif" fill="#ddd">
        meet.google.com is sharing a window
      </text>
      <rect x="60" y="36" width="25" height="9" rx="4.500" fill="#a8c7fa" />
      <text x="63" y="42" fontSize="3" fontFamily="Inter, sans-serif" fill="#123">
        Stop sharing
      </text>
      <text x="87" y="42" fontSize="3" fontFamily="Inter, sans-serif" fill="#a8c7fa">
        Hide
      </text>
      <ChromeBadge />
    </svg>
  );
}

function Trash() {
  return (
    <svg className="h-[82px] w-[74px] overflow-visible" viewBox="0 0 74 82">
      <defs>
        <linearGradient id="bin" x1="0" y1="0" x2="1" y2="0">
          <stop offset="0" stopColor="#62676a" />
          <stop offset="0.5" stopColor="#55595c" />
          <stop offset="0.9" stopColor="#74797c" />
          <stop offset="1" stopColor="#565a5d" />
        </linearGradient>
        <radialGradient id="binGlow" cx="0.3" cy="0.95" r="0.4">
          <stop offset="0" stopColor="#b5babd" />
          <stop offset="1" stopColor="#b5babd" stopOpacity="0" />
        </radialGradient>
      </defs>
      <path d="M1 4L11 78Q14 86 37 86T63 78L73 4Z" fill="url(#bin)" />
      <path d="M1 4L11 78Q14 86 37 86T63 78L73 4Z" fill="url(#binGlow)" />
      <ellipse cx="37" cy="4" rx="36" ry="7.500" fill="#3f4447" stroke="#7a7f82" strokeWidth="1.500" />
    </svg>
  );
}

type DockItem = { name: string; icon: React.ReactNode; running?: boolean };

const apps: DockItem[] = [
  { name: "Finder", icon: <Finder />, running: true },
  { name: "Launchpad", icon: <Launchpad /> },
  { name: "Messages", icon: <Messages /> },
  { name: "Mail", icon: <Mail /> },
  { name: "VMware Fusion", icon: <VmWare /> },
  { name: "Maps", icon: <Maps /> },
  { name: "FaceTime", icon: <FaceTime /> },
  { name: "Xcode", icon: <Xcode /> },
  { name: "Calendar", icon: <Calendar /> },
  { name: "Contacts", icon: <Contacts /> },
  { name: "TextEdit", icon: <TextEdit /> },
  { name: "Reminders", icon: <Reminders /> },
  { name: "Notes", icon: <Notes />, running: true },
  { name: "Todoist", icon: <Todoist /> },
  { name: "Brave", icon: <BraveApp />, running: true },
  { name: "VS Code", icon: <VsCode />, running: true },
  { name: "Terminal", icon: <Terminal />, running: true },
  { name: "System Settings", icon: <Settings /> },
  { name: "Chrome", icon: <Chrome />, running: true },
];

const recents: DockItem[] = [
  { name: "WhatsApp", icon: <WhatsApp />, running: true },
  { name: "Preview", icon: <Preview />, running: true },
  { name: "Pages", icon: <Pages />, running: true },
  { name: "pgAdmin", icon: <Postgres />, running: true },
];

const windows: DockItem[] = [
  { name: "Documents", icon: <DocStack /> },
  { name: "Chat window", icon: <ThumbChat /> },
  { name: "Report window", icon: <ThumbDoc /> },
  { name: "Editor window", icon: <ThumbEditor /> },
  { name: "Sharing window", icon: <ThumbSharing /> },
  { name: "Trash", icon: <Trash /> },
];

function DockGroup({ items }: { items: DockItem[] }) {
  return (
    <div className="flex">
      {items.map((it) => (
        <button key={it.name} aria-label={it.name} className="flex w-[109px] flex-col items-center pt-[18px]">
          {it.icon}
          {it.running && <span className="mt-[18px] size-2 rounded-full bg-[#909090]" />}
        </button>
      ))}
    </div>
  );
}

function DockDivider() {
  return (
    <div className="flex w-12 items-center justify-center">
      <span className="h-24 w-0.5 bg-[#424242]" />
    </div>
  );
}

function Dock() {
  return (
    <footer className="relative flex h-[148px] shrink-0 justify-center pt-1.5 pb-2.5">
      <div className="flex rounded-[36px] border-2 border-[#333] bg-[#131313] px-1 shadow-[0_0_80px_rgba(0,0,0,0.27)]">
        <DockGroup items={apps} />
        <DockDivider />
        <DockGroup items={recents} />
        <DockDivider />
        <DockGroup items={windows} />
      </div>
    </footer>
  );
}

export default function App() {
  return (
    <div className="flex min-h-screen flex-col bg-black font-['Inter',sans-serif]">
      <MenuBar />
      <BrowserWindow />
      <Dock />
    </div>
  );
}
